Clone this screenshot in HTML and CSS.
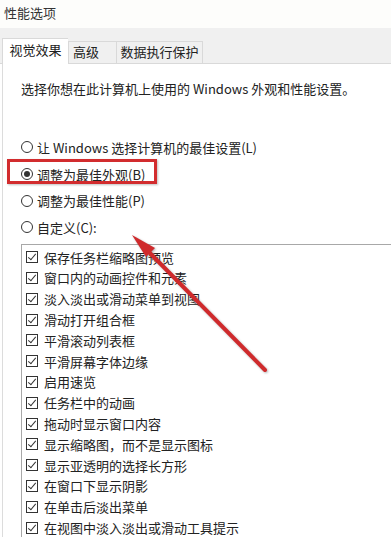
FILE: index.html
```html
<!DOCTYPE html>
<html lang="zh-CN">
<head>
<meta charset="utf-8">
<title>性能选项</title>
<link rel="stylesheet" href="styles.css">
</head>
<body>
<div class="window">
  <div class="titlebar">性能选项</div>
  <div class="tabstrip">
    <div class="tab tab-active">视觉效果</div>
    <div class="tab tab-adv">高级</div>
    <div class="tab tab-dep">数据执行保护</div>
  </div>
  <div class="panel">
    <p class="desc">选择你想在此计算机上使用的 Windows 外观和性能设置。</p>
    <div class="radios">
      <div class="radio-row"><span class="radio"></span><span>让 Windows 选择计算机的最佳设置(L)</span></div>
      <div class="radio-row"><span class="radio radio-on"></span><span>调整为最佳外观(B)</span></div>
      <div class="radio-row"><span class="radio"></span><span>调整为最佳性能(P)</span></div>
      <div class="radio-row"><span class="radio"></span><span>自定义(C):</span></div>
    </div>
    <div class="listbox">
      <div class="item"><span class="check"></span>保存任务栏缩略图预览</div>
      <div class="item"><span class="check"></span>窗口内的动画控件和元素</div>
      <div class="item"><span class="check"></span>淡入淡出或滑动菜单到视图</div>
      <div class="item"><span class="check"></span>滑动打开组合框</div>
      <div class="item"><span class="check"></span>平滑滚动列表框</div>
      <div class="item"><span class="check"></span>平滑屏幕字体边缘</div>
      <div class="item"><span class="check"></span>启用速览</div>
      <div class="item"><span class="check"></span>任务栏中的动画</div>
      <div class="item"><span class="check"></span>拖动时显示窗口内容</div>
      <div class="item"><span class="check"></span>显示缩略图，而不是显示图标</div>
      <div class="item"><span class="check"></span>显示亚透明的选择长方形</div>
      <div class="item"><span class="check"></span>在窗口下显示阴影</div>
      <div class="item"><span class="check"></span>在单击后淡出菜单</div>
      <div class="item"><span class="check"></span>在视图中淡入淡出或滑动工具提示</div>
    </div>
  </div>
  <div class="highlight"></div>
  <svg class="arrow" width="391" height="537" viewBox="0 0 391 537">
    <line x1="265" y1="370" x2="146" y2="249" stroke="#cf2a2c" stroke-width="4" stroke-linecap="round"/>
    <polygon points="132,235 155,248 146,257" fill="#cf2a2c"/>
  </svg>
</div>
</body>
</html>
```

FILE: styles.css
```css
* { box-sizing: border-box; }
html, body { margin: 0; padding: 0; }
body {
  width: 391px;
  height: 537px;
  overflow: hidden;
  background: #fff;
  font-family: "Noto Sans CJK SC", "Noto Sans", sans-serif;
  font-size: 13px;
  color: #222;
}
.window { position: relative; width: 391px; height: 537px; }
.titlebar {
  height: 28px;
  line-height: 25px;
  padding-left: 4px;
  background: #fdfdfb;
  color: #333;
}
.tabstrip {
  height: 36px;
  background: #f0f0f0;
  display: flex;
  align-items: flex-end;
  padding-left: 2px;
  border-bottom: 1px solid #d9d9d9;
}
.tab {
  height: 22px;
  line-height: 20px;
  border: 1px solid #d9d9d9;
  border-bottom: none;
  background: #f0f0f0;
  text-align: center;
  margin-bottom: 0;
}
.tab-active {
  width: 66px;
  height: 26px;
  line-height: 22px;
  background: #fff;
  margin-bottom: -1px;
  border-right: none;
  position: relative;
}
.tab-adv { width: 49px; text-align: left; padding-left: 4px; }
.tab-dep { width: 86px; border-left: none; }
.panel {
  border-left: 1px solid #dcdcdc;
  margin-left: 2px;
  padding: 16px 0 0 18px;
  height: 473px;
}
.desc {
  margin: 0;
  line-height: 18px;
  height: 18px;
}
.radios { margin-top: 36px; }
.radio-row {
  height: 26.7px;
  display: flex;
  align-items: center;
  gap: 4px;
}
.radio {
  width: 12px;
  height: 12px;
  border: 1px solid #333;
  border-radius: 50%;
  display: flex;
  align-items: center;
  justify-content: center;
  flex: none;
}
.radio-on::after {
  content: "";
  width: 6px;
  height: 6px;
  border-radius: 50%;
  background: #333;
}
.listbox {
  margin-top: 3px;
  border-top: 1px solid #a8a8a8;
  border-left: 1px solid #a8a8a8;
  padding: 2px 0 0 4px;
}
.item {
  height: 20.8px;
  display: flex;
  align-items: center;
  gap: 6px;
  white-space: nowrap;
}
.check {
  width: 12px;
  height: 12px;
  border: 1px solid #333;
  flex: none;
  position: relative;
}
.check::after {
  content: "";
  position: absolute;
  left: 3px;
  top: 0px;
  width: 3px;
  height: 7px;
  border-right: 1.2px solid #333;
  border-bottom: 1.2px solid #333;
  transform: rotate(40deg);
}
.highlight {
  position: absolute;
  left: 7px;
  top: 159px;
  width: 150px;
  height: 25px;
  border: 3px solid #d22c2e;
  box-shadow: 1px 1px 2px rgba(0,0,0,0.25);
}
.arrow {
  position: absolute;
  left: 0;
  top: 0;
  filter: drop-shadow(1px 1px 1px rgba(0,0,0,0.3));
}
```
